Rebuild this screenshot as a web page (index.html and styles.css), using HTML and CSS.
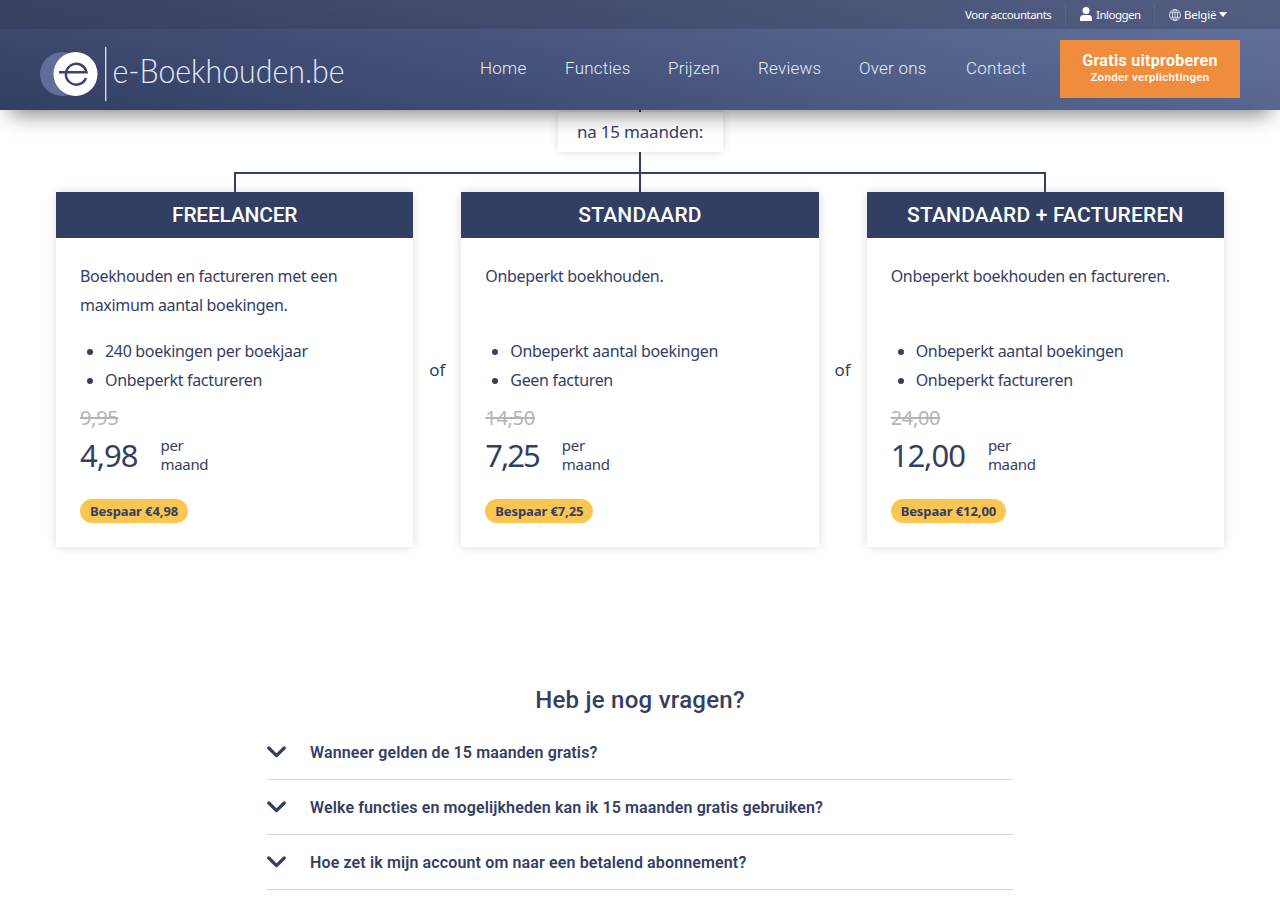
FILE: index.html
```html
<!DOCTYPE html>
<html lang="nl">
<head>
    <meta charset="UTF-8">
    <meta name="viewport" content="width=device-width, initial-scale=1.0">
    <title>Prijzen | e-Boekhouden.be</title>
    <link rel="stylesheet" href="styles.css">
</head>
<body>

    <header class="site-header">
        <div class="top-bar">
            <a href="#" class="top-link accountants">Voor accountants</a>
            <a href="#" class="top-link login">
                <svg width="12" height="14" viewBox="0 0 12 14"><circle cx="6" cy="3.6" r="3.5" fill="#fff"/><path d="M0 14v-2.4C0 9.4 1.4 8 3.4 8h5.2C10.6 8 12 9.4 12 11.6V14z" fill="#fff"/></svg>
                <span>Inloggen</span>
            </a>
            <a href="#" class="top-link country">
                <svg width="12" height="12" viewBox="0 0 12 12" fill="none" stroke="#dde3f0" stroke-width=".9"><circle cx="6" cy="6" r="5.5"/><ellipse cx="6" cy="6" rx="2.6" ry="5.5"/><path d="M6 .5v11M1.3 3.7h9.4M1.3 8.3h9.4" stroke-width=".8"/></svg>
                <span>België</span>
                <svg class="caret" width="8" height="5" viewBox="0 0 8 5"><path d="M.3 0h7.4q.4.3 0 .8L4.5 4.6q-.5.5-1 0L.3.8Q-.1.3.3 0z" fill="#fff"/></svg>
            </a>
        </div>

        <div class="main-bar">
            <a href="#" class="logo">
                <svg width="320" height="56" viewBox="0 0 320 56">
                    <circle cx="22" cy="28" r="22" fill="#616e99"/>
                    <circle cx="35.5" cy="28" r="22" fill="#fff"/>
                    <path d="M19 26.2H46.5A10.4 10.4 0 1 0 46 32" fill="none" stroke="#3a4270" stroke-width="2.5"/>
                    <path d="M65.7 1v54" stroke="#dfe6f5" stroke-width="1.3"/>
                    <text class="logo-text" x="72.5" y="36.5" textLength="232" lengthAdjust="spacingAndGlyphs">e-Boekhouden.be</text>
                </svg>
            </a>
            <nav class="main-nav">
                <a href="#">Home</a>
                <a href="#">Functies</a>
                <a href="#">Prijzen</a>
                <a href="#">Reviews</a>
                <a href="#">Over ons</a>
                <a href="#">Contact</a>
            </nav>
            <a href="#" class="cta">
                <strong>Gratis uitproberen</strong>
                <span>Zonder verplichtingen</span>
            </a>
        </div>
    </header>

    <main>
        <div class="tree">
            <div class="line line-short"></div>
            <div class="period">na 15 maanden:</div>
            <div class="line"></div>
            <div class="branch"><div class="line"></div></div>
        </div>

        <section class="plans">
            <article class="plan">
                <h2 class="narrow">FREELANCER</h2>
                <div class="plan-body">
                    <p>Boekhouden en factureren met een maximum aantal boekingen.</p>
                    <ul>
                        <li>240 boekingen per boekjaar</li>
                        <li>Onbeperkt factureren</li>
                    </ul>
                    <del>9,95</del>
                    <div class="price"><b>4,98</b><span>per<br>maand</span></div>
                    <span class="badge">Bespaar €4,98</span>
                </div>
            </article>
            <div class="or">of</div>
            <article class="plan">
                <h2>STANDAARD</h2>
                <div class="plan-body">
                    <p>Onbeperkt boekhouden.</p>
                    <ul>
                        <li>Onbeperkt aantal boekingen</li>
                        <li>Geen facturen</li>
                    </ul>
                    <del>14,50</del>
                    <div class="price"><b class="tight">7,25</b><span>per<br>maand</span></div>
                    <span class="badge">Bespaar €7,25</span>
                </div>
            </article>
            <div class="or">of</div>
            <article class="plan">
                <h2>STANDAARD + FACTUREREN</h2>
                <div class="plan-body">
                    <p>Onbeperkt boekhouden en factureren.</p>
                    <ul>
                        <li>Onbeperkt aantal boekingen</li>
                        <li>Onbeperkt factureren</li>
                    </ul>
                    <del>24,00</del>
                    <div class="price"><b>12,00</b><span>per<br>maand</span></div>
                    <span class="badge">Bespaar €12,00</span>
                </div>
            </article>
        </section>

        <section class="faq">
            <h2>Heb je nog vragen?</h2>
            <div class="question">
                <svg width="19" height="12" viewBox="0 0 19 12"><path d="M1.8 2l7.7 7.6L17.2 2"/></svg>
                <h3>Wanneer gelden de 15 maanden gratis?</h3>
            </div>
            <div class="question">
                <svg width="19" height="12" viewBox="0 0 19 12"><path d="M1.8 2l7.7 7.6L17.2 2"/></svg>
                <h3>Welke functies en mogelijkheden kan ik 15 maanden gratis gebruiken?</h3>
            </div>
            <div class="question">
                <svg width="19" height="12" viewBox="0 0 19 12"><path d="M1.8 2l7.7 7.6L17.2 2"/></svg>
                <h3>Hoe zet ik mijn account om naar een betalend abonnement?</h3>
            </div>
        </section>
    </main>

</body>
</html>
```
FILE: styles.css
```css
* {
    box-sizing: border-box;
}

body {
    font-family: 'Noto Sans', 'Open Sans', sans-serif;
    font-size: 16px;
    line-height: 29px;
    color: #343e63;
    background-color: #fff;
    margin: 0;
    height: 900px;
    overflow: hidden;
}

a {
    color: #fff;
    text-decoration: none;
}

h2, h3, p, ul {
    margin: 0;
}

/* header */
.site-header {
    position: relative;
    z-index: 2;
    height: 110px;
    background: linear-gradient(to bottom, rgba(255, 255, 255, .05), rgba(0, 0, 0, .05)), linear-gradient(80deg, #354168 0%, #43507b 40%, #52638e 75%, #5c6b98 100%);
    box-shadow: 0 14px 20px -10px rgba(0, 0, 0, .5);
}

.top-bar {
    display: flex;
    justify-content: flex-end;
    align-items: center;
    height: 29px;
    padding-right: 40px;
    background-color: rgba(45, 45, 70, .3);
    font-size: 11.5px;
    line-height: 22px;
}

.top-link {
    display: flex;
    align-items: center;
    height: 22px;
    gap: 4px;
    white-space: nowrap;
    letter-spacing: -.5px;
}

.accountants {
    width: 100px;
}

.login {
    width: 89px;
    padding-left: 14px;
    border-left: 1px solid rgba(255, 255, 255, .07);
}

.login svg {
    margin-top: -2px;
}

.country {
    width: 86px;
    padding-left: 14px;
    gap: 3px;
    border-left: 1px solid rgba(255, 255, 255, .07);
    letter-spacing: -.2px;
}

.main-bar {
    display: flex;
    height: 81px;
    padding: 0 40px;
}

.logo {
    width: 440px;
    padding-top: 17px;
}

.logo svg {
    display: block;
}

.logo-text {
    font-family: Lato, 'Open Sans', sans-serif;
    font-size: 34px;
    font-weight: 300;
    fill: #e3ebfa;
}

.main-nav {
    display: grid;
    grid-template-columns: 85px 103px 90px 101px 107px 94px;
    padding-top: 25px;
    font-family: Roboto, sans-serif;
    font-size: 17px;
    font-weight: 300;
    letter-spacing: .25px;
    white-space: nowrap;
}

.main-nav a {
    color: #e6edfb;
}

.cta {
    width: 180px;
    height: 58px;
    margin-top: 11px;
    padding-top: 11px;
    background-color: #f08d3c;
    text-align: center;
    white-space: nowrap;
    font-family: Roboto, sans-serif;
    letter-spacing: .3px;
}

.cta strong {
    display: block;
    font-size: 16px;
    line-height: 19px;
}

.cta span {
    display: block;
    font-size: 11.5px;
    font-weight: 600;
    line-height: 14px;
}

/* connector lines above the plans */
.tree {
    display: flex;
    flex-direction: column;
    align-items: center;
}

.line {
    width: 2px;
    height: 20px;
    background-color: #343e63;
}

.line-short {
    height: 2px;
}

.period {
    width: 165px;
    height: 40px;
    line-height: 40px;
    text-align: center;
    font-size: 17px;
    letter-spacing: -.2px;
    background-color: #fff;
    box-shadow: 0 0 8px rgba(0, 0, 0, .14);
}

.branch {
    display: flex;
    justify-content: center;
    width: 812px;
    height: 20px;
    border: 2px solid #343e63;
    border-bottom: none;
}

/* plans */
.plans {
    display: grid;
    grid-template-columns: 1fr 48px 1fr 48px 1fr;
    align-items: center;
    width: 1168px;
    margin: 0 auto;
}

.plan {
    height: 355px;
    background-color: #fff;
    box-shadow: 0 0 10px rgba(0, 0, 0, .14);
}

.plan h2 {
    height: 46px;
    line-height: 46px;
    background-color: #323e62;
    color: #fff;
    text-align: center;
    font-family: Roboto, sans-serif;
    font-size: 21px;
    font-weight: 500;
    letter-spacing: .2px;
}

.plan .narrow {
    letter-spacing: -.25px;
}

.plan-body {
    padding: 24px;
    letter-spacing: -.32px;
}

.plan-body p {
    height: 58px;
}

.plan-body ul {
    margin-top: 17px;
    padding-left: 25px;
}

.plan-body del {
    display: block;
    height: 28px;
    margin-top: 8px;
    font-size: 20px;
    color: #b5b5b5;
}

.price {
    display: flex;
    gap: 23px;
    height: 48px;
}

.price b {
    font-size: 31px;
    font-weight: 400;
    line-height: 48px;
    letter-spacing: -1px;
}

.price .tight {
    letter-spacing: -2px;
}

.price span {
    padding-top: 5px;
    font-size: 15px;
    line-height: 19px;
}

.badge {
    display: block;
    width: fit-content;
    height: 24px;
    margin-top: 20px;
    padding: 0 10px;
    border-radius: 12px;
    background-color: #fac551;
    font-size: 13px;
    font-weight: 700;
    line-height: 24px;
    letter-spacing: -.1px;
}

.or {
    text-align: center;
    font-size: 17px;
}

/* faq */
.faq {
    width: 746px;
    margin: 133px auto 0;
    font-family: Roboto, sans-serif;
}

.faq h2 {
    height: 45px;
    line-height: 40px;
    text-align: center;
    font-size: 24px;
    font-weight: 500;
    letter-spacing: .25px;
}

.question {
    display: flex;
    align-items: center;
    gap: 24px;
    height: 55px;
    border-bottom: 1px solid #d3d3d3;
}

.question svg {
    fill: none;
    stroke: #343e63;
    stroke-width: 3.3;
    stroke-linecap: round;
    stroke-linejoin: round;
}

.question h3 {
    font-size: 16px;
    font-weight: 600;
    letter-spacing: .13px;
    white-space: nowrap;
}
```
